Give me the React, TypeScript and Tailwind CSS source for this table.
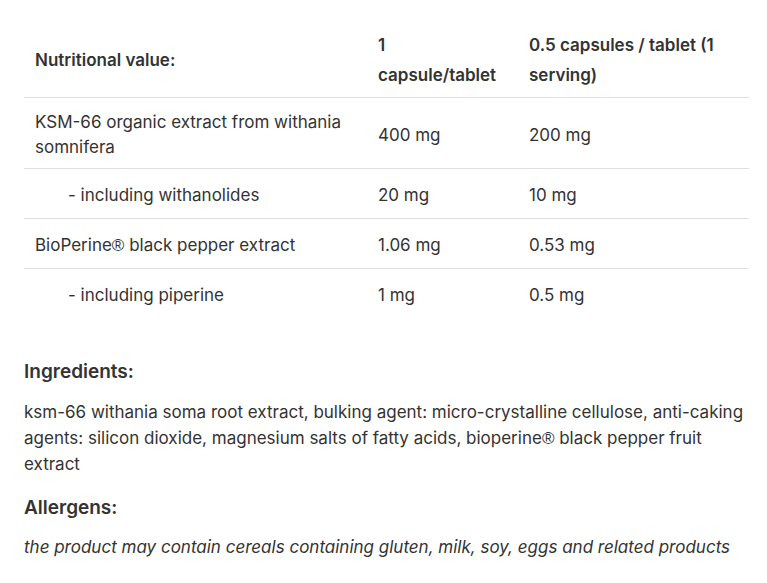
const R = () => <span className="leading-none font-['Liberation_Sans',sans-serif]">®</span>

const rows = [
  { name: <>KSM-66 organic extract from withania somnifera</>, a: '400 mg', b: '200 mg', sub: false },
  { name: <>- including withanolides</>, a: '20 mg', b: '10 mg', sub: true },
  { name: <>BioPerine<R /> black pepper extract</>, a: '1.06 mg', b: '0.53 mg', sub: false },
  { name: <>- including piperine</>, a: '1 mg', b: '0.5 mg', sub: true },
]

export default function App() {
  return (
    <div className="min-h-screen bg-white pl-6 pr-4 pt-[30px] text-[17px] text-[#333] font-['Inter',sans-serif]">
      <table className="w-[725px] border-collapse table-fixed">
        <colgroup>
          <col className="w-[343px]" />
          <col className="w-[151px]" />
          <col className="w-[231px]" />
        </colgroup>
        <thead>
          <tr className="border-b border-[#e0e0e0]">
            <th className="px-[11px] pb-[7px] text-left align-middle font-semibold leading-[30px]">Nutritional value:</th>
            <th className="px-[11px] pb-[7px] text-left align-middle font-semibold leading-[30px]">1 capsule/tablet</th>
            <th className="px-[11px] pb-[7px] text-left align-middle font-semibold leading-[30px]">0.5 capsules / tablet (1 serving)</th>
          </tr>
        </thead>
        <tbody>
          {rows.map((r, i) => (
            <tr key={i} className={i < rows.length - 1 ? 'border-b border-[#e0e0e0]' : ''}>
              <td className={`h-[50px] pt-[12px] pb-[8px] pr-[11px] align-middle leading-[25px] ${r.sub ? 'pl-[44px]' : 'pl-[11px]'}`}>{r.name}</td>
              <td className="h-[50px] px-[11px] pt-[12px] pb-[8px] align-middle leading-[25px]">{r.a}</td>
              <td className="h-[50px] px-[11px] pt-[12px] pb-[8px] align-middle leading-[25px]">{r.b}</td>
            </tr>
          ))}
        </tbody>
      </table>

      <h3 className="mt-[40px] text-[19px] font-semibold leading-[26px]">Ingredients:</h3>
      <p className="mt-[14px] leading-[26px]">
        ksm-66 withania soma root extract, bulking agent: micro-crystalline cellulose, anti-caking agents: silicon dioxide, magnesium salts of fatty acids, bioperine<R /> black pepper fruit extract
      </p>
      <h3 className="mt-[18px] text-[19px] font-semibold leading-[26px]">Allergens:</h3>
      <p className="mt-[13px] italic leading-[26px]">
        the product may contain cereals containing gluten, milk, soy, eggs and related products
      </p>
    </div>
  )
}
